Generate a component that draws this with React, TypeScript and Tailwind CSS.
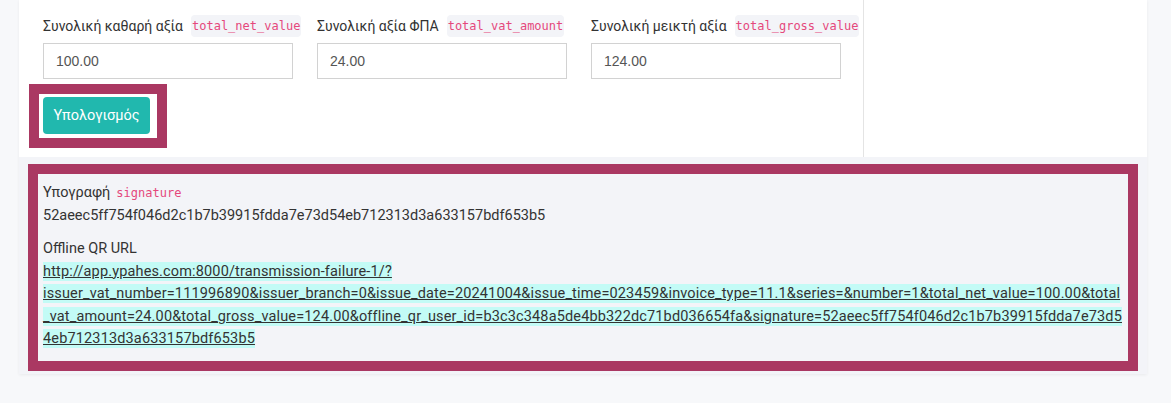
const sans = "font-['Roboto','Noto_Sans',sans-serif]";
const mono = "font-['DejaVu_Sans_Mono','Liberation_Mono',monospace]";

const fields = [
  { label: "Συνολική καθαρή αξία", code: "total_net_value", value: "100.00" },
  { label: "Συνολική αξία ΦΠΑ", code: "total_vat_amount", value: "24.00" },
  { label: "Συνολική μεικτή αξία", code: "total_gross_value", value: "124.00" },
];

const signature = "52aeec5ff754f046d2c1b7b39915fdda7e73d54eb712313d3a633157bdf653b5";
const qrUrl =
  "http://app.ypahes.com:8000/transmission-failure-1/?issuer_vat_number=111996890&issuer_branch=0&issue_date=20241004&issue_time=023459&invoice_type=11.1&series=&number=1&total_net_value=100.00&total_vat_amount=24.00&total_gross_value=124.00&offline_qr_user_id=b3c3c348a5de4bb322dc71bd036654fa&signature=" +
  signature;

function Code({ children }: { children: string }) {
  return (
    <code className={`${mono} text-[12px] text-[#e5487c] bg-[#f3f4f8] px-[1px] py-[1px] rounded-sm`}>
      {children}
    </code>
  );
}

export default function App() {
  return (
    <div className={`${sans} min-h-screen bg-[#f7f8fa] pl-[19px] text-[14.5px] text-[#333]`}>
      <div className="w-[1128px] bg-white shadow-[0_1px_3px_rgba(0,0,0,0.06)]">
        {/* totals */}
        <div className="flex">
          <div className="w-[845px] border-r border-[#e4e4e4] pl-[24px] pt-[16px] pb-[9px]">
            <div className="grid grid-cols-[250px_250px_250px] gap-x-6">
              {fields.map((f) => (
                <div key={f.code}>
                  <label className="flex items-center gap-2 h-[20px] leading-[20px] mb-[7px] whitespace-nowrap text-[14px]">
                    <span>{f.label}</span>
                    <Code>{f.code}</Code>
                  </label>
                  <input
                    readOnly
                    value={f.value}
                    className="w-full h-[36px] border border-[#d2d2d2] px-3 font-['Liberation_Sans',Arial,sans-serif] text-[14px] text-[#555] outline-none"
                  />
                </div>
              ))}
            </div>
            <div className="mt-[5px] -ml-[14px] w-fit border-[10px] border-[#aa3862] bg-white pt-[3px] pl-[4px] pr-[7px] pb-[4px]">
              <button className="h-[37px] w-[107px] rounded-[4px] bg-[#21b8ae] text-white text-[14.5px]">
                Υπολογισμός
              </button>
            </div>
          </div>
          <div className="flex-1" />
        </div>

        {/* results */}
        <div className="bg-[#f3f4f8] px-[9px] pt-[7px] pb-[3px]">
          <div className="border-[10px] border-[#aa3862] pl-[5px] pr-[5px] pt-[8px] pb-[10px] leading-[22.5px]">
            <div>
              <div className="flex items-center gap-[6px]">
                <span>Υπογραφή</span>
                <code className={`${mono} text-[12px] text-[#e5487c]`}>signature</code>
              </div>
              <div>{signature}</div>
            </div>
            <div className="mt-[11px]">
              <div>Offline QR URL</div>
              <a
                href="#"
                className="underline bg-[#c3fbf6] py-px text-[#333] tracking-[0.15px] [overflow-wrap:anywhere]"
              >
                {qrUrl}
              </a>
            </div>
          </div>
        </div>
      </div>
    </div>
  );
}
